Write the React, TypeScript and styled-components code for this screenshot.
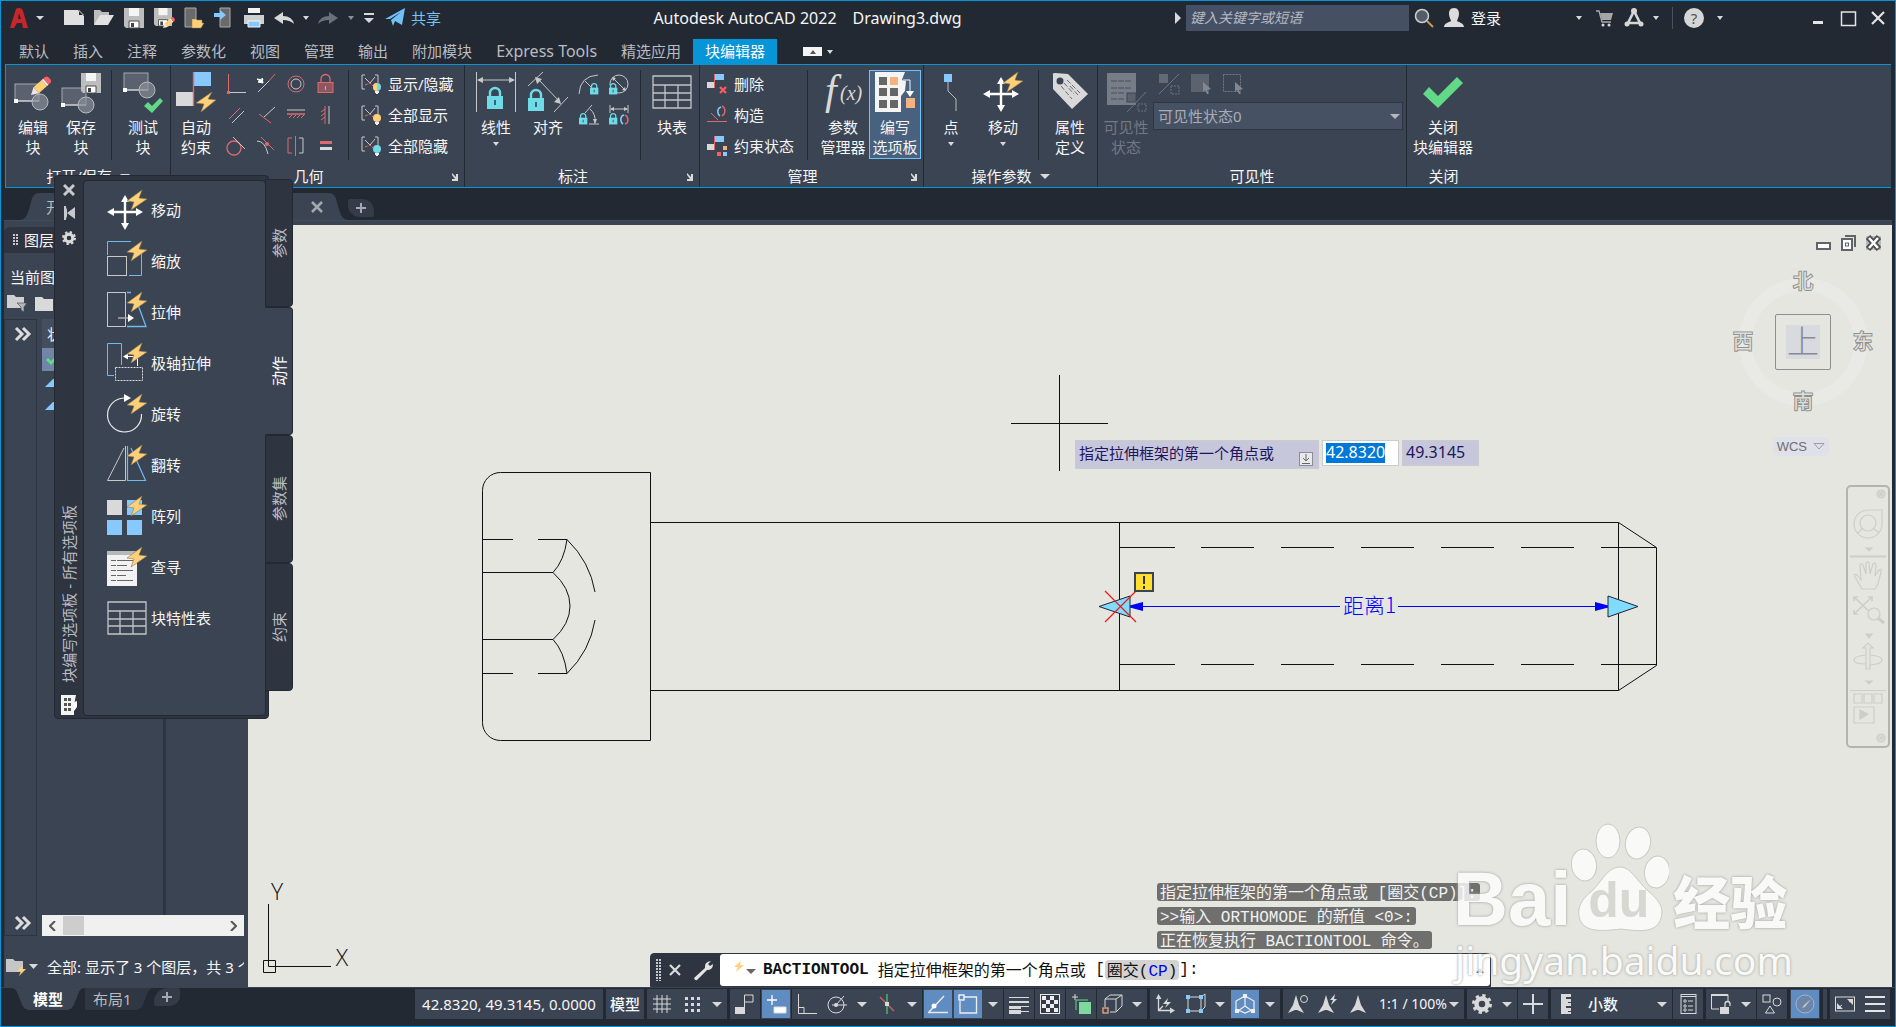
import React from "react";
import styled, { createGlobalStyle, css } from "styled-components";

const c = {
  dark: "#222933",
  panel: "#3b4453",
  bar: "#2e3440",
  accent: "#0696d7",
  canvas: "#e5e6e0",
  text: "#f5f5f5",
  dim: "#b9bcc2",
  grey: "#d9d9d9",
  line: "#c8c8c8",
  red: "#e0696d",
  blue: "#87c9fc",
  cyan: "#6fdbe6",
  gold: "#ffd078",
  green: "#62d987",
};

const Global = createGlobalStyle`
  * { box-sizing: border-box; }
  body { margin: 0; background: ${c.dark}; overflow: hidden; }
  body, button, input, select {
    font-family: "Noto Sans", "Noto Sans CJK SC", sans-serif;
    font-size: 15px;
    line-height: 20px;
  }
  button, input, select { margin: 0; padding: 0; border: 0; background: none; color: inherit; border-radius: 0; }
  svg { display: block; flex: none; }
`;

/* ---------- icons ---------- */

const Bolt = () => (
  <path d="M35 0L20 11L27 12L24 20L40 9L32 8Z" fill={c.gold} stroke="#8f7a50" strokeWidth=".6" />
);
const Pencil = ({ t }: { t: string }) => (
  <g transform={t}>
    <path d="M0 0L7 -4V4Z" fill="#e8e8e8" />
    <rect x="7" y="-4" width="11" height="8" fill={c.gold} />
    <rect x="18" y="-4" width="2" height="8" fill="#f4f4f4" />
    <path d="M20 -4h2a3 4 0 0 1 0 8h-2z" fill="#ff5f63" />
  </g>
);
const Floppy = ({ t }: { t?: string }) => (
  <g transform={t}>
    <path d="M0 0H20V20H2L0 18Z" fill="#bdbdbd" />
    <path d="M5 0H15V8H5Z" fill="#f5f5f5" />
    <path d="M5 13H15V20H5Z" fill="#fff" stroke="#4d4d4d" />
    <path d="M7 15h3v4H7z" fill="#444" />
  </g>
);
const Lock = ({ t }: { t?: string }) => (
  <g transform={t}>
    <path d="M3 10V6a5 5 0 0 1 10 0V10" fill="none" stroke={c.cyan} strokeWidth="2.4" />
    <rect y="9" width="16" height="13" fill={c.cyan} />
    <path d="M8 13v5" stroke="#2b4550" strokeWidth="1.6" />
  </g>
);
const Table = () => (
  <path d="M1 4H39V36H1ZM1 13H39M1 21H39M1 28H39M13 13V36M26 13V36" fill="none" stroke="#c4c4c4" strokeWidth="1.3" />
);
const Cross4 = () => (
  <g>
    <path d="M18 7V35M4 21H32" stroke="#fff" strokeWidth="2.4" />
    <path d="M18 4l4 7h-8zM18 39l4-7h-8zM0 21l7-4v8zM36 21l-7-4v8z" fill="#fff" />
  </g>
);
const Shape = ({ x, y, cx, cy }: { x: number; y: number; cx: number; cy: number }) => (
  <g>
    <rect x={x} y={y} width="24" height="17" fill="#5b616e" stroke="#a5a8ae" />
    <path d={`M${x} ${y + 17}h24`} stroke="#e6e6e6" />
    <rect x={x - 1} y={y + 15} width="4" height="4" fill="#fff" />
    <circle cx={cx} cy={cy} r="8" fill="#8b909a" fillOpacity=".7" stroke="#b6b9be" />
  </g>
);
const Brackets = ({ bulb, half }: { bulb: string; half?: string }) => (
  <g>
    <path d="M4 1H1V15H4M14 1H17V9" fill="none" stroke={c.line} />
    <path d="M9 9L14 3" fill="none" stroke={c.line} />
    <path d="M9 9L4 4" fill="none" stroke={c.line} />
    <path d="M4 11L9 9L12 12" fill="none" stroke={c.red} strokeDasharray="3 1" />
    <circle cx="16" cy="13" r="4" fill={bulb} />
    {half && <path d="M16 9a4 4 0 0 0 0 8z" fill={half} />}
    <path d="M14 17h4v2h-1v1h-2v-1h-1z" fill="#f0f0f0" />
  </g>
);
const Blocks = () => (
  <g>
    <rect y="8" width="7" height="6" fill={c.grey} />
    <rect x="8" width="9" height="6" fill={c.blue} />
    <path d="M7.500 0V14" stroke={c.red} />
  </g>
);
const R = ({ d, s = c.line, w = 1 }: { d: string; s?: string; w?: number }) => (
  <path d={d} fill="none" stroke={s} strokeWidth={w} />
);

const art: Record<string, React.ReactNode> = {
  edit: <><Shape x={2} y={12} cx={27} cy={30} /><Pencil t="translate(18 23) rotate(-42)" /></>,
  save: <><Shape x={1} y={16} cx={25} cy={33} /><Floppy t="translate(20 1)" /></>,
  test: <><Shape x={1} y={1} cx={24} cy={18} /><path d="M21 34l4-4 4 4 8-8 3 3-11 12z" fill={c.green} /></>,
  auto: <>
    <rect y="20" width="17" height="14" fill={c.grey} /><rect x="18" width="17" height="14" fill={c.blue} />
    <R d="M17.500 0V34" s={c.red} w={1.4} /><path d="M36 20L20 31L28 32L25 40L40 28L32 27Z" fill={c.gold} stroke="#8f7a50" strokeWidth=".6" /></>,
  linear: <><R d="M.5 0V40M39.500 0V40M2 8H38" /><path d="M1 8l6-3v6zM39 8l-6-3v6z" fill={c.line} /><Lock t="translate(11 15)" /></>,
  aligned: <><R d="M0 14L15 0M26 40L40 25M10 7L32 30" /><path d="M7 5l7 2-5 5zM33 32l-7-2 5-5z" fill={c.line} /><Lock t="translate(0 17)" /></>,
  table: <Table />,
  fx: <>
    <text x="2" y="32" fill={c.grey} fontFamily="Liberation Serif, serif" fontStyle="italic" fontSize="42">f</text>
    <text x="17" y="28" fill={c.grey} fontFamily="Liberation Serif, serif" fontStyle="italic" fontSize="20">(x)</text></>,
  author: <>
    <path d="M0 0H30L26 10V40H0Z" fill="#f4f4f4" />
    {[5, 16, 28].map((y) => [4, 15].map((x) => (
      <rect key={x + y * 50} x={x} y={y} width="8" height="8" fill={x === 15 && y === 5 ? "#f5b27f" : "#666"} />)))}
    <path d="M26 8l5 1-1 10-4 5z" fill="#f4f4f4" /><R d="M28 8H35V19" s="#f4f4f4" /><path d="M31 19h8l-4 6z" fill="#fff" />
    <rect x="31" y="26" width="9" height="10" fill="#f5b27f" /></>,
  point: <><rect x="13" y="2" width="8" height="8" fill={c.blue} /><R d="M17 10V19L25 27V39" s="#bbb" /></>,
  move: <><g transform="translate(0 1)"><Cross4 /></g><Bolt /></>,
  tag: <><path d="M3 3Q2 1 5 1L18 2L38 22L22 37L3 17Z" fill={c.grey} /><circle cx="10" cy="9" r="3.500" fill={c.panel} />
    <path d="M17 8L30 21M14 11L24 22M11 14L22 27M20 14l8 9" stroke="#6a6f78" strokeDasharray="5 2" /></>,
  vis: <g opacity=".75"><path d="M1 1H30V33H1Z" fill="#8c9099" /><path d="M5 9H26M5 16H26M5 21H19M5 27H19" stroke="#4d545f" strokeDasharray="6 1" />
    <rect x="21" y="21" width="9" height="9" fill="#666c78" stroke="#3b4453" /><R d="M21 40L40 20" s="#7e838d" /><rect x="32" y="32" width="8" height="7" fill="none" stroke="#7e838d" strokeDasharray="2 1" /></g>,
  check: <path d="M0 22L6 15L15 24L34 5L40 11L15 36Z" fill={c.green} />,

  perp: <><R d="M2.500 0V19" s={c.red} /><R d="M2 18.500H20" /><rect x="1" y="17" width="3" height="3" fill={c.red} /></>,
  coll: <><R d="M2 18L14 6" /><R d="M13 7L19 0" s={c.red} /><path d="M1 5l6 1-1-2 1 5-5-1 2-1z" fill="#fff" stroke="#fff" /></>,
  conc: <><circle cx="10" cy="10" r="8" fill="none" stroke={c.red} /><circle cx="10" cy="10" r="5" fill="none" stroke={c.line} /></>,
  fix: <><path d="M5 9V5a4 4 0 0 1 9 0V9" fill="none" stroke={c.red} strokeWidth="1.300" /><rect x="2" y="8.500" width="15" height="10" fill="#8e565f" stroke={c.red} /><R d="M9.500 12v4" s="#e8a0a0" /></>,
  para: <><R d="M3 14L14 3" s={c.red} /><R d="M6 18L18 6" /></>,
  tang2: <><R d="M8 12L19 2" /><R d="M3 9L15 18" s={c.red} /></>,
  horiz: <><R d="M1 5H19" /><R d="M1 9H19" s={c.red} w={1.500} /><R d="M6 10L3 13M10 10L7 13M14 10L11 13M18 10L15 13" s={c.red} /></>,
  vert: <><R d="M13 1V19" /><R d="M9 1V19" s={c.red} /><R d="M9 4L5 7M9 8L5 11M9 12L5 15" s={c.red} /></>,
  tang: <><circle cx="8" cy="12" r="7" fill="none" stroke={c.red} strokeWidth="1.300" /><R d="M7 1L19 13" /></>,
  smooth: <><R d="M1 5Q9 5 12 18" /><R d="M5 1L18 14" s={c.red} /><circle cx="11" cy="8" r="2" fill={c.red} /></>,
  sym: <><R d="M6 2H2V17H6" s={c.red} /><R d="M13 2H17V17H13" /><R d="M9.500 0V20" s={c.red} /></>,
  equal: <><path d="M4 5h12v3H4z" fill={c.red} /><path d="M4 11h12v3H4z" fill={c.grey} /></>,
  showhide: <Brackets bulb={c.cyan} half={c.gold} />,
  showall: <Brackets bulb={c.gold} />,
  hideall: <Brackets bulb={c.cyan} />,
  rad: <><R d="M0 20Q1 2 19 1M6 7L13 14" /><Lock t="translate(11 9) scale(.52)" /></>,
  dia: <><circle cx="10" cy="10" r="9" fill="none" stroke={c.line} /><R d="M4 4L16 16" /><path d="M3 3l4 1-3 3zM17 17l-4-1 3-3z" fill={c.line} /><Lock t="translate(0 9) scale(.52)" /></>,
  ang: <><R d="M10 19H20M6 8L13 0M11 4Q17 9 16 18" /><path d="M16 19l-2-5h4z" fill={c.line} /><Lock t="translate(0 8) scale(.52)" /></>,
  conv: <><R d="M1 0V8M19 0V8M2 4H18" /><path d="M1 4l4-2v4zM19 4l-4-2v4z" fill={c.line} /><Lock t="translate(0 8) scale(.52)" />
    <R d="M14 19a4 5 0 0 1-1-8l2-1" s={c.blue} w={1.600} /><R d="M16 10a4 5 0 0 1 2 8l-2 1" s={c.red} w={1.600} /></>,
  del: <><Blocks /><R d="M13 13L19 19M19 13L13 19" s="#ff5a5f" w={2.200} /></>,
  cons: <><R d="M0 16.500H20" s={c.red} /><R d="M4 8L11 15" s={c.red} /><R d="M13 11a4 5 0 0 1-1-8l2-1" s={c.blue} w={1.500} /><R d="M15 1a4 5 0 0 1 2 8l-2 2" s={c.red} w={1.500} /></>,
  state: <><Blocks /><rect x="10" y="16" width="4" height="4" fill="#ff5a5f" /><rect x="16" y="16" width="4" height="4" fill={c.blue} /><rect x="16" y="10" width="4" height="4" fill="#f5b27f" /></>,
  v1: <g opacity=".5"><rect width="9" height="9" fill="#8c9099" /><R d="M0 20L20 0" s="#a0a4ac" /><rect x="12" y="12" width="8" height="8" fill="none" stroke="#a0a4ac" strokeDasharray="2 1" /></g>,
  v2: <g opacity=".7"><rect width="18" height="18" fill="#6b717c" /><path d="M12 8l8 7-4 1 2 4-2 0-2-4-2 2z" fill="#a0a4ac" /></g>,
  v3: <g opacity=".7"><rect x=".5" y=".5" width="17" height="17" fill="none" stroke="#8c9099" strokeDasharray="2 1" /><path d="M12 8l8 7-4 1 2 4-2 0-2-4-2 2z" fill="#a0a4ac" /></g>,

  new: <path d="M0 2H14L20 8V17H0ZM15 2V7H20Z" fill="#e0e0e0" />,
  open: <><path d="M0 17V2H6L8 4H15V8" fill="#bdbdbd" /><path d="M0 17L6 7H20L14 17Z" fill="#e2e2e2" /></>,
  floppy: <Floppy />,
  saveas: <><Floppy t="scale(.9)" /><Pencil t="translate(9 20) rotate(-42) scale(.6)" /></>,
  web: <><path d="M1 0H12V19H1Z" fill="#6a6a6a" stroke="#aaa" /><path d="M8 20V11h4l1 1h5v3h2l-3 5z" fill={c.gold} stroke="#8f7a50" strokeWidth=".5" /></>,
  mobile: <><path d="M6 0H16V19H6Z" fill="#6a6a6a" stroke="#aaa" /><path d="M0 5h6V2l6 5-6 5V9H0z" fill={c.blue} /></>,
  print: <><path d="M4 0H16V5H4Z" fill="#f2f2f2" /><path d="M0 7H20V16H0Z" fill="#cfcfcf" /><path d="M4 13H16V19H4Z" fill={c.blue} stroke="#f4f4f4" /></>,
  undo: <path d="M0 10L9 4V8Q18 8 20 16Q16 12 9 12V16Z" fill={c.grey} />,
  redo: <path d="M20 10L11 4V8Q2 8 0 16Q4 12 11 12V16Z" fill="#6a7079" />,
  custom: <><path d="M0 4H10V6H0Z" fill={c.grey} /><path d="M0 9H10L5 14Z" fill={c.grey} /></>,
  plane: <path d="M0 11L20 0L17 17L10 13L8 18L6 12L16 4L5 11Z" fill="#71c1f7" />,
  play: <path d="M0 4L6 10L0 16Z" fill={c.grey} />,
  mag: <><circle cx="7" cy="8" r="6.500" fill="#555c69" stroke="#d0d0d0" strokeWidth="1.500" /><path d="M12 13L18 19" stroke="#c99a5b" strokeWidth="2" /></>,
  user: <path d="M10 0c4 0 5 3 5 6s-2 6-2 7c1 1 7 2 7 6H0c0-4 6-5 7-6 0-1-2-4-2-7s1-6 5-6z" fill="#dcdcdc" />,
  cart: <><path d="M0 2H3L6 13H15" fill="none" stroke="#aaa" strokeWidth="1.300" /><path d="M4 4H17L15 11H6Z" fill="#a6a6a6" /><circle cx="7" cy="16" r="1.500" fill={c.grey} /><circle cx="13" cy="16" r="1.500" fill={c.grey} /></>,
  apps: <><path d="M10 3L4 15H16Z" fill="none" stroke="#d6d6d6" strokeWidth="2.600" /><circle cx="10" cy="3" r="3" fill="#d6d6d6" /><circle cx="3" cy="16" r="2.500" fill="#d6d6d6" /><circle cx="17" cy="16" r="2.500" fill="#d6d6d6" /></>,
  min: <path d="M0 12h10v3H0z" fill="#e4e4e4" />,
  max: <path d="M.5 4H14.500V17.500H.5ZM0 4H15" fill="none" stroke="#e4e4e4" strokeWidth="1.500" />,
  close: <path d="M1 4L13 16M13 4L1 16" fill="none" stroke="#e4e4e4" strokeWidth="2.200" />,
  logo: <path d="M0 20L6 1Q7 0 9 0Q12 0 13 3L18 20H13L12 15H7L4 20ZM8 11H11L9 5Z" fill="#c8262b" fillRule="evenodd" />,

  pScale: <><rect x=".5" y="15.500" width="19" height="19" fill="none" stroke={c.line} /><path d="M.5 14V.5H24M34.500 10V34.500H22" fill="none" stroke="#6fb9ee" /><Bolt /></>,
  pStretch: <><path d="M20 .5H24M30 10L39 34.500H20" fill="none" stroke="#6fb9ee" strokeWidth="1.300" /><rect x=".5" y=".5" width="18" height="34" fill="none" stroke={c.line} /><R d="M11 26H22" s="#aaa" w={1.500} /><path d="M21 22l6 4-6 4z" fill="#fff" /><Bolt /></>,
  pPolar: <><path d="M7 32.500H.5V.5H14.500V22" fill="none" stroke="#6fb9ee" /><rect x="8.500" y="24.500" width="27" height="13" fill="none" stroke="#ddd" strokeDasharray="2 1" /><R d="M20 13.500H30.500V23" s="#fff" /><path d="M16 13.500l5-3v6z" fill="#fff" /><Bolt /></>,
  pRotate: <><path d="M17 4A17 17 0 1 0 34.500 20" fill="none" stroke="#e6e6e6" strokeWidth="1.200" /><path d="M17 0l7 4-7 4z" fill="#fff" /><Bolt /></>,
  pFlip: <><path d="M18.500 1V35.500H.5L17 3" fill="none" stroke={c.line} /><path d="M20.500 1V35.500H38.500L24 3" fill="none" stroke="#6fb9ee" strokeWidth="1.200" /><Bolt /></>,
  pArray: <><rect y="4" width="15" height="15" fill={c.grey} /><path d="M20 4h15v15H20zM0 24h15v15H0zM20 24h15v15H20z" fill={c.blue} /><Bolt /></>,
  pLookup: <><path d="M0 4H30V39H0Z" fill="#f2f2f2" /><path d="M0 4H30V8H0Z" fill="#b8b8b8" /><path d="M4 13.500H26M4 18.500H20M4 23.500H26M4 28.500H19M4 33.500H26" stroke="#666" strokeDasharray="5 1 20" /><Bolt /></>,
  pGrid: <><path d="M0 0H15L13 10V20H0Z" fill="#f4f4f4" /><path d="M13 7l3-1v6l-3 4z" fill="#fff" /><path d="M3 3h3v3H3zM7 3h3v3H7zM3 8h3v3H3zM7 8h3v3H7zM3 13h3v3H3zM7 13h3v3H7z" fill="#555" /></>,

  sGrid: <R d="M1 5H19M1 10H19M1 15H19M5 1V19M10 1V19M15 1V19" s={c.grey} />,
  sDots: <path d="M3 3h3v3H3zM9 3h3v3H9zM15 3h3v3h-3zM3 9h3v3H3zM9 9h3v3H9zM15 9h3v3h-3zM3 15h3v3H3zM9 15h3v3H9zM15 15h3v3h-3z" fill={c.grey} />,
  sInfer: <><rect y="13" width="9" height="7" fill={c.grey} /><R d="M9.500 20V1H18V8H10" s={c.grey} /></>,
  sDyn: <><R d="M6 1V11M1 6H11" s="#fff" w={1.300} /><path d="M8 13H20V19H8Z" fill="#fff" stroke="#ddd" /></>,
  sOrtho: <><R d="M1.500 0V19.500H20M1 13.500H7V19" s={c.grey} /></>,
  sPolar: <><circle cx="9" cy="11" r="8" fill="none" stroke={c.grey} /><R d="M9 11L17 2M5 11H20" s={c.grey} /><circle cx="9" cy="11" r="2" fill={c.grey} /></>,
  sIso: <><R d="M3 3L17 17" s="#c0605f" w={1.500} /><R d="M10 0V20" s="#4fb06c" w={1.500} /><rect x="8" y="8" width="4" height="4" fill={c.grey} /></>,
  sTrack: <><R d="M0 18.500H20M1 18L16 2" s="#e8e8e8" w={1.500} /><circle cx="6" cy="12" r="2.500" fill="#fff" /></>,
  sSnap: <><R d="M6 3H18.500V19H2V7" s="#eee" w={1.300} /><rect x="1" y="1" width="5" height="5" fill="none" stroke="#fff" strokeWidth="1.300" /></>,
  sLwt: <path d="M0 3H20V4H0ZM0 7H20V9H0ZM0 12H20V13H0ZM0 12H12V15H0ZM0 17H20V18H0ZM0 16H12V20H0Z" fill={c.grey} />,
  sTrans: <><rect x=".5" y=".5" width="19" height="19" fill="#333b48" stroke="#e8e8e8" /><path d="M2 2h4v4H2zM10 2h4v4h-4zM6 6h4v4H6zM14 6h4v4h-4zM2 10h4v4H2zM10 10h4v4h-4zM6 14h4v4H6zM14 14h4v4h-4z" fill="#eee" /></>,
  sCycle: <><R d="M4 0V6M1 3H7" s={c.grey} /><R d="M5 16V6H17" s={c.green} /><rect x="8" y="8" width="12" height="12" fill="#7fd99f" /></>,
  s3d: <><R d="M3 13V5L8 1H20V12L14 18H8M3 5H14V17M14 5L20 1" s={c.grey} /><rect x="1" y="14" width="5" height="5" fill="none" stroke="#f5a878" strokeWidth="1.300" /></>,
  sUcs: <><R d="M3.500 3V16.500H17M4 16L8 12" s={c.grey} w={1.300} /><path d="M3.500 0l3 5H1zM20 16.500l-5 3v-6zM13 4l-5 6h4l-2 4 6-6h-4z" fill={c.grey} /></>,
  sFilter: <><R d="M3 3V17H16V3ZM16 3L20 0V13L16 17" s={c.grey} /><path d="M1 1h4v4H1zM14 1h4v4h-4zM1 15h4v4H1zM14 15h4v4h-4z" fill={c.blue} /></>,
  sGizmo: <><R d="M10 2L19 7V15L10 19L1 15V7ZM10 3V12L3 17M10 12L17 17" s="#eee" w={1.200} /><path d="M8 0h4v4H8zM0 15h4v4H0zM16 15h4v4h-4z" fill="#eee" /></>,
  sAnno1: <><path d="M8 1L11 11L16 19L9 16H7L0 19L5 11Z" fill={c.grey} /><circle cx="16" cy="5" r="3.500" fill="none" stroke={c.grey} /></>,
  sAnno2: <><path d="M8 1L11 11L16 19L9 16H7L0 19L5 11Z" fill={c.grey} /><path d="M17 0l-5 6h3l-2 5 6-6h-3z" fill={c.grey} /></>,
  sAnno3: <path d="M10 1L13 11L18 19L11 16H9L2 19L7 11Z" fill={c.grey} />,
  gear: <><circle cx="10" cy="10" r="5.500" fill="none" stroke={c.grey} strokeWidth="4.500" /><circle cx="10" cy="10" r="8.500" fill="none" stroke={c.grey} strokeWidth="3" strokeDasharray="3.300 3.376" /></>,
  plus: <path d="M9 0h2v9h9v2h-9v9H9v-9H0V9h9z" fill={c.grey} />,
  ruler: <path d="M5 0H15V3H10V5H15V8H12V9H15V12H10V14H15V17H12V18H15V20H5Z" fill={c.grey} />,
  sProps: <><rect x="3" y=".5" width="15" height="19" fill="none" stroke={c.grey} /><path d="M3 2.500H18M6 6h2v2H6zM6 11h2v2H6zM6 15h2v2H6z" stroke={c.grey} /><R d="M10 7H15M10 12H15M10 16H15" s={c.grey} /></>,
  sLock: <><R d="M8 15H.5V.5H17V8" s={c.grey} /><path d="M0 0h17v2H0z" fill={c.grey} /><rect x="9" y="13" width="9" height="7" fill={c.grey} /><R d="M14 13V10a2.500 2.500 0 0 1 5 0v2" s={c.grey} w={1.300} /></>,
  sIsolate: <><rect x="1" y="1" width="7" height="7" fill="none" stroke={c.grey} /><circle cx="15" cy="8" r="4" fill="none" stroke={c.grey} /><path d="M8 12L12.500 19H3.500Z" fill="none" stroke={c.grey} /></>,
  sPerf: <><circle cx="10" cy="10" r="9" fill="#6c86ab" stroke="#a5b3c8" /><path d="M16 5L10 13L7 14L9 11Z" fill="#c9c3b4" /></>,
  sFull: <><rect x=".5" y="3" width="19" height="14" fill="none" stroke={c.grey} /><path d="M12 5h6v6zM2 9v6h6z" fill={c.grey} /><R d="M14 8L17 6M3 14L7 11" s={c.grey} /></>,
  sMenu: <path d="M0 2h20v2H0zM0 9h20v2H0zM0 16h20v2H0z" fill="#e4e4e4" />,
  wrench: <path d="M1 18L12 8Q11 2 18 1L15 4L17 6L20 4Q20 10 14 10L4 20Q2 21 1 18Z" fill="#e4e4e4" />,
  folderF: <><path d="M0 2H7L9 4H17V15H0Z" fill="#d0d0d0" /><path d="M10 10H20L17 14V19L14 17V14Z" fill="#b5b5b5" stroke="#3b4453" strokeWidth=".6" /></>,
  folder: <><path d="M0 4H7L9 6H18V18H0Z" fill="#d9d9d9" /></>,
  folderB: <><path d="M0 2H7L9 4H17V15H0Z" fill="#c6c6c6" /><path d="M17 8l-6 6h4l-2 5 7-7h-4z" fill={c.gold} /></>,
  dbl: <path d="M1 4L7 10L1 16M8 4L14 10L8 16" fill="none" stroke="#dcdcdc" strokeWidth="3" />,
  launch: <path d="M0 1l4 4V2h2v7H0V7h3L0 3z" fill={c.grey} />,
  pin: <path d="M0 3h2v14H0zM3 10l8-6v12zM3 4v12l-1-3V7z" fill="#c6c9ce" />,
};

const Ic = ({ n, w = 20, h }: { n: string; w?: number; h?: number }) => (
  <svg width={w} height={h ?? w} viewBox={`0 0 ${w} ${h ?? w}`} aria-hidden="true" overflow="visible">{art[n]}</svg>
);
const Caret = ({ w = 7, fill = c.grey }: { w?: number; fill?: string }) => (
  <svg width={w} height={w > 8 ? 5 : 4} viewBox="0 0 8 4" preserveAspectRatio="none" aria-hidden="true"><path d="M0 0H8L4 4Z" fill={fill} /></svg>
);

/* ---------- frame ---------- */

const Window = styled.div`
  position: relative;
  display: flex;
  flex-direction: column;
  height: 100vh;
  min-height: 760px;
  border: 1px solid ${c.accent};
  background: ${c.dark};
  color: ${c.text};
  overflow: hidden;
`;
const IconButton = styled.button<{ $w?: number; $h?: number }>`
  display: flex;
  flex: none;
  align-items: center;
  justify-content: center;
  width: ${(p) => p.$w ?? 30}px;
  height: ${(p) => p.$h ?? 30}px;
`;

/* ---------- title bar ---------- */

const TitleBar = styled.header`
  display: flex;
  align-items: center;
  height: 38px;
  padding: 0 2px 4px 4px;
`;
const Title = styled.h1`
  flex: 1;
  margin: 0;
  display: flex;
  justify-content: center;
  gap: 16px;
  font-size: 16px;
  font-weight: 400;
  white-space: nowrap;
`;
const Share = styled.button`
  display: flex;
  align-items: center;
  gap: 6px;
  padding-left: 6px;
  color: #76c3f5;
`;
const Search = styled.input`
  width: 223px;
  height: 26px;
  margin: 0 3px 0 4px;
  padding: 0 4px 2px;
  background: #465064;
  color: ${c.text};
  font-size: 14px;
  font-style: italic;
  &::placeholder { color: #b5b9c1; opacity: 1; }
`;
const SignIn = styled.button`
  display: flex;
  align-items: center;
  gap: 7px;
  width: 133px;
  padding-left: 8px;
`;
const Rule = styled.span`
  width: 1px;
  height: 22px;
  margin: 0 8px 0 9px;
  background: #4a5261;
`;
const Help = styled.span`
  display: grid;
  place-items: center;
  width: 20px;
  height: 20px;
  border-radius: 50%;
  background: #d6d6d6;
  color: #4b5059;
`;

/* ---------- ribbon ---------- */

const TabRow = styled.nav`
  display: flex;
  align-items: stretch;
  height: 25px;
  padding-left: 6px;
`;
const Tab = styled.button<{ $on?: boolean; $latin?: boolean }>`
  padding: 0 12px 2px;
  white-space: nowrap;
  color: ${(p) => (p.$on ? "#fff" : c.dim)};
  font-size: ${(p) => (p.$latin ? 16 : 15)}px;
  ${(p) => p.$on && css`background: ${c.accent};`}
`;
const Minimize = styled.button`
  display: flex;
  align-items: center;
  gap: 5px;
  margin-left: 26px;
`;
const MinimizeBox = styled.span`
  display: grid;
  place-items: center;
  width: 19px;
  height: 9px;
  background: #f4f4f4;
`;
const Ribbon = styled.section`
  display: flex;
  height: 124px;
  margin: 0 4px;
  border: 1px solid ${c.accent};
  border-right: 0;
  background: ${c.panel};
`;
const GroupBox = styled.div<{ $w: number; $last?: boolean }>`
  display: flex;
  flex-direction: column;
  flex: none;
  width: ${(p) => p.$w}px;
  ${(p) => !p.$last && css`border-right: 1px solid ${c.dark};`}
`;
const GroupBody = styled.div<{ $pad?: number }>`
  display: flex;
  align-items: flex-start;
  flex: 1;
  padding-left: ${(p) => p.$pad ?? 0}px;
`;
const GroupTitle = styled.div`
  display: flex;
  align-items: center;
  justify-content: center;
  gap: 8px;
  height: 22px;
`;
const GroupName = styled.span`flex: 0 0 auto;`;
const TitleGrow = styled.span`flex: 1; text-align: center; padding-left: 8px;`;
const Big = styled.button<{ $w?: number; $on?: boolean }>`
  display: flex;
  flex-direction: column;
  align-items: center;
  gap: 5px;
  flex: none;
  width: ${(p) => p.$w ?? 52}px;
  height: 89px;
  margin-top: 5px;
  padding-top: 1px;
  border: 1px solid transparent;
  white-space: pre;
  text-align: center;
  ${(p) => p.$on && css`
    border: 1px solid #6fc2f5;
    background: #47617f;
  `}
  &:disabled { color: #727884; }
`;
const BigLabel = styled.span`
  display: flex;
  flex-direction: column;
  align-items: center;
`;
const CaretRow = styled.span`
  display: grid;
  place-items: center;
  height: 14px;
`;
const Divider = styled.span<{ $l: number; $r: number }>`
  flex: none;
  width: 1px;
  height: 90px;
  margin: 5px ${(p) => p.$r}px 0 ${(p) => p.$l}px;
  background: ${c.dark};
`;
const Small = styled.div<{ $cols: number }>`
  display: grid;
  flex: none;
  grid-template-columns: repeat(${(p) => p.$cols}, 30px);
  grid-auto-rows: 31px;
  padding-top: 3px;
`;
const Rows = styled.div<{ $w?: number }>`
  display: grid;
  flex: none;
  grid-auto-rows: 31px;
  width: ${(p) => p.$w ?? 93}px;
  padding-top: 3px;
`;
const RowButton = styled.button`
  display: flex;
  align-items: center;
  gap: 7px;
  white-space: nowrap;
`;
const Visibility = styled.div`
  display: flex;
  flex-direction: column;
  flex: 1;
  padding: 4px 3px 0 1px;
`;
const SmallRow = styled.div`
  display: flex;
  height: 33px;
`;
const SelectBox = styled.label`
  position: relative;
  display: block;
  border: 1px solid #2e3543;
`;
const SelectArrow = styled.span`
  position: absolute;
  right: 2px;
  top: 11px;
  pointer-events: none;
`;
const Select = styled.select`
  display: block;
  width: 100%;
  height: 26px;
  padding: 0 4px;
  appearance: none;
  background: #475164;
  color: #a9adb5;
  opacity: 1;
`;

const Button2 = ({ icon, a, b, w, on, off, drop }: { icon: string; a: string; b?: string; w?: number; on?: boolean; off?: boolean; drop?: boolean }) => (
  <Big $w={w} $on={on} disabled={off}>
    <Ic n={icon} w={40} />
    <BigLabel>
      <span>{a}</span>
      {b && <span>{b}</span>}
      {drop && <CaretRow><Caret w={6} /></CaretRow>}
    </BigLabel>
  </Big>
);
const Group = ({ w, pad, title, launch, drop, last, children }: { w: number; pad?: number; title: string; launch?: boolean; drop?: boolean; last?: boolean; children: React.ReactNode }) => (
  <GroupBox $w={w} $last={last}>
    <GroupBody $pad={pad}>{children}</GroupBody>
    <GroupTitle>
      {launch ? <TitleGrow>{title}</TitleGrow> : <GroupName>{title}</GroupName>}
      {drop && <Caret w={10} />}
      {launch && <IconButton $w={18} $h={20} aria-label="对话框"><Ic n="launch" w={6} h={9} /></IconButton>}
    </GroupTitle>
  </GroupBox>
);
const IconGrid = ({ cols, names }: { cols: number; names: string[] }) => (
  <Small $cols={cols}>
    {names.map((n) => <IconButton key={n} $h={31} aria-label={n}><Ic n={n} /></IconButton>)}
  </Small>
);
const TextRows = ({ items, w }: { items: [string, string][]; w?: number }) => (
  <Rows $w={w}>
    {items.map(([n, t]) => <RowButton key={n}><Ic n={n} />{t}</RowButton>)}
  </Rows>
);

/* ---------- drawing tabs ---------- */

const FileTabs = styled.nav`
  display: flex;
  align-items: flex-end;
  height: 32px;
  margin: 0 3px;
  padding-left: 16px;
`;
const FileTab = styled.button<{ $w: number }>`
  display: flex;
  align-items: center;
  justify-content: space-between;
  width: ${(p) => p.$w}px;
  height: 27px;
  padding: 0 4px 0 6px;
  background: ${c.panel};
  color: ${c.dim};
`;
const Strip = styled.div`
  height: 5px;
  margin: 0 3px;
  background: ${c.panel};
  border-top: 1px solid #434b59;
`;
const Slope = ({ flip, down, fill = c.panel, h = 27 }: { flip?: boolean; down?: boolean; fill?: string; h?: number }) => {
  const path = down
    ? (flip ? "M0 27C8 27 8 22 11 14S14 0 20 0H0Z" : "M20 27C12 27 12 22 9 14S6 0 0 0H20Z")
    : (flip ? "M0 0C8 0 8 6 10 13S14 27 20 27H0Z" : "M20 0C12 0 12 6 10 13S6 27 0 27H20Z");
  return <svg width="20" height={h} viewBox="0 0 20 27" preserveAspectRatio="none" aria-hidden="true"><path d={path} fill={fill} /></svg>;
};
const AddTab = styled.button<{ $up?: boolean }>`
  display: grid;
  place-items: center;
  width: 26px;
  height: 18px;
  margin-bottom: 3px;
  background: #343c49;
  border-radius: ${(p) => (p.$up ? "14px 2px 10px 2px" : "2px 12px 2px 12px")};
`;
const PlusMark = () => <svg width="10" height="10" viewBox="0 0 10 10" aria-hidden="true"><path d="M4 0h2v4h4v2H6v4H4V6H0V4h4z" fill="#a4a8af" /></svg>;

/* ---------- main area ---------- */

const Main = styled.main`
  display: flex;
  flex: 1;
  min-height: 0;
  margin: 0 3px;
`;
const Layers = styled.aside`
  display: flex;
  flex-direction: column;
  flex: none;
  width: 244px;
  padding-top: 2px;
  background: ${c.panel};
  overflow: hidden;
  white-space: nowrap;
`;
const LayersHead = styled.h2`
  display: flex;
  align-items: center;
  gap: 6px;
  height: 26px;
  margin: 0;
  padding-left: 9px;
  border-radius: 6px 6px 0 0;
  background: ${c.bar};
  font-size: 15px;
  font-weight: 400;
`;
const Grip = styled.span<{ $h: number }>`
  width: 5px;
  height: ${(p) => p.$h}px;
  background-image: radial-gradient(circle at 1px 1px, #c5c8cd 1px, transparent 1px);
  background-size: 3px 3px;
`;
const Current = styled.p`
  margin: 0;
  padding: 14px 6px 0;
`;
const LayerTools = styled.div`
  display: flex;
  gap: 8px;
  height: 32px;
  padding: 6px 3px 0;
`;
const LayerBody = styled.div`
  display: flex;
  flex: 1;
`;
const Tree = styled.div`
  display: flex;
  flex-direction: column;
  align-items: flex-end;
  justify-content: space-between;
  width: 33px;
  padding: 0 1px 2px 0;
  border: 1px solid ${c.bar};
`;
const LayerList = styled.div`
  display: flex;
  flex-direction: column;
  flex: 1;
  margin: 0 4px 0 5px;
`;
const LayerTable = styled.table`
  width: 100%;
  border-collapse: collapse;
  th { height: 29px; padding: 0 5px; background: #444e5f; font-weight: 400; text-align: left; }
  td { height: 23px; padding: 0 3px; }
`;
const LayerRow = styled.tr<{ $on?: boolean }>`
  background: ${(p) => (p.$on ? "#7186a6" : "transparent")};
`;
const Columns = styled.div`
  flex: 1;
  width: 124px;
  border-right: 3px solid ${c.bar};
`;
const Scroll = styled.div`
  display: flex;
  align-items: center;
  height: 21px;
  background: #f0f0f0;
`;
const Thumb = styled.span`
  width: 21px;
  height: 19px;
  background: #cdcdcd;
`;
const Grow = styled.span`flex: 1;`;
const LayerFoot = styled.div`
  display: flex;
  align-items: center;
  height: 51px;
  padding: 10px 4px 0 2px;
`;
const FootText = styled.span`
  flex: 1;
  margin-left: 7px;
  overflow: hidden;
`;

/* ---------- canvas ---------- */

const Canvas = styled.section`
  position: relative;
  flex: 1;
  background: ${c.canvas};
  overflow: hidden;
`;
const Drawing = styled.svg`
  position: absolute;
  inset: 0;
  width: 100%;
  height: 100%;
`;
const Prompt = styled.form`
  position: absolute;
  left: 827px;
  top: 215px;
  display: flex;
  align-items: flex-start;
  gap: 3px;
  color: #1d1560;
`;
const PromptText = styled.div`
  display: flex;
  width: 244px;
  height: 29px;
  padding: 2px 3px;
  justify-content: space-between;
  border: 1px solid #cacad0;
  background: #c7c7db;
  white-space: nowrap;
`;
const PromptKey = styled.span`
  display: grid;
  place-items: center;
  align-self: flex-end;
  width: 14px;
  height: 14px;
  margin-right: 2px;
  border: 1px solid #8c8c94;
  background: #e9e9ec;
`;
const Coord = styled.input<{ $on?: boolean }>`
  width: 77px;
  height: 26px;
  padding: 0 3px 2px;
  border: 1px solid #cacad0;
  background: #c7c7db;
  color: #1d1560;
  font-size: 16px;
  ${(p) => p.$on && css`
    color: #fff;
    background: linear-gradient(#0078d7, #0078d7) 3px 2px / 59px 20px no-repeat #fff;
  `}
`;
const ViewControls = styled.div`
  position: absolute;
  right: 11px;
  top: 10px;
  display: flex;
  gap: 10px;
`;
const Cube = styled.div`
  position: absolute;
  right: 19px;
  top: 45px;
  display: grid;
  grid-template: 42px 60px 42px / 40px 60px 40px;
  place-items: center;
  font-size: 20px;
  line-height: 24px;
`;
const CubeRing = styled.span`
  position: absolute;
  left: 6px;
  top: 8px;
  width: 128px;
  height: 128px;
  border: 13px solid #e9eae5;
  border-radius: 50%;
`;
const Compass = styled.span<{ $area: string }>`
  position: relative;
  grid-area: ${(p) => p.$area};
  place-self: ${(p) => (p.$area === "1/2" ? "start center" : p.$area === "3/2" ? "end center" : p.$area === "2/1" ? "center start" : "center end")};
  color: #e0e0dc;
  -webkit-text-stroke: 2px #8f9190;
  paint-order: stroke;
`;
const CubeFace = styled.button`
  grid-area: 2/2;
  display: grid;
  place-items: center;
  width: 56px;
  height: 56px;
  border: 1px solid #8e9090;
  border-radius: 2px;
`;
const FaceMark = styled.span`
  width: 34px;
  height: 34px;
  background: #d9dadf;
  color: #868b91;
  font-size: 32px;
  line-height: 32px;
  font-weight: 300;
`;
const Wcs = styled.button`
  position: absolute;
  right: 63px;
  top: 212px;
  display: flex;
  align-items: center;
  gap: 6px;
  height: 19px;
  padding: 0 4px;
  border-radius: 5px;
  background: #dfe0e9;
  color: #6d6f75;
  font: 13px/19px "Liberation Sans", sans-serif;
`;
const NavBar = styled.div`
  position: absolute;
  right: 2px;
  top: 260px;
  width: 44px;
  height: 263px;
  border: 2px solid #b3b4ae;
  border-radius: 5px;
`;
const History = styled.div`
  position: absolute;
  left: 909px;
  bottom: 38px;
  display: flex;
  flex-direction: column;
  align-items: flex-start;
  gap: 6px;
`;
const Mono = styled.span`
  font-family: "Liberation Mono", "Noto Sans CJK SC", monospace;
  font-size: 16px;
  white-space: pre;
`;
const HistoryLine = styled.div`
  height: 18px;
  padding: 0 3px;
  border-radius: 3px;
  background: #6f706e;
  color: #f2f2f2;
  font-size: 16px;
  line-height: 18px;
  white-space: pre;
`;
const Command = styled.div`
  position: absolute;
  left: 402px;
  right: 401px;
  bottom: 0;
  display: flex;
  align-items: center;
  height: 34px;
  border: 1px solid ${c.bar};
  border-radius: 4px 4px 0 0;
  background: ${c.bar};
`;
const CommandText = styled.div`
  display: flex;
  align-items: center;
  align-self: stretch;
  flex: 1;
  padding: 0 6px 0 14px;
  border-radius: 3px;
  background: #fff;
  color: #111;
  font-size: 16px;
  white-space: pre;
`;
const Option = styled.button`
  height: 20px;
  padding: 0 2px;
  border-radius: 4px;
  background: #d3d3d3;
  font-size: 16px;
  i { font-style: normal; color: #0000f0; }
`;
const CommandName = styled(Mono)`margin: 0 9px 0 7px; font-weight: 700;`;
const Watermark = styled.div`
  position: absolute;
  right: 97px;
  bottom: 4px;
  width: 342px;
  opacity: .8;
  color: #fff;
  pointer-events: none;
  text-shadow: 0 0 3px #a0a09a, 0 0 2px #b4b4ae;
`;
const MarkTop = styled.div`
  display: flex;
  align-items: flex-end;
  height: 114px;
  font: 700 76px/76px "Liberation Sans", sans-serif;
`;
const MarkPaw = styled.div`
  position: relative;
  width: 96px;
  height: 114px;
  margin: 0 4px 0 -2px;
`;
const MarkDu = styled.span`
  position: absolute;
  left: 19px;
  top: 52px;
  color: #d4d5cf;
  font-size: 50px;
  line-height: 50px;
  text-shadow: none;
`;
const MarkCjk = styled.span`
  margin: 0 0 2px 4px;
  font: 900 57px/72px "Noto Sans CJK SC", sans-serif;
`;
const MarkUrl = styled.div`
  font: 39px/46px "Noto Sans", sans-serif;
  text-align: center;
`;

/* ---------- tool palette ---------- */

const Palette = styled.aside`
  position: absolute;
  left: 53px;
  top: 174px;
  display: flex;
  align-items: flex-start;
`;
const PaletteFrame = styled.div`
  display: flex;
  width: 215px;
  height: 544px;
  padding: 4px 2px 2px 0;
  border: 1px solid ${c.dark};
  border-radius: 4px;
  background: ${c.bar};
`;
const PaletteSide = styled.div`
  display: flex;
  flex-direction: column;
  align-items: center;
  width: 28px;
  padding-bottom: 1px;
`;
const SideTitle = styled.span`
  margin: auto 0 12px;
  writing-mode: vertical-rl;
  text-orientation: sideways;
  transform: rotate(180deg);
  color: ${c.dim};
  white-space: nowrap;
`;
const Tools = styled.ul`
  flex: 1;
  margin: 0;
  padding: 4px 0 0 23px;
  list-style: none;
  border: 1px solid ${c.dark};
  border-radius: 4px;
  background: ${c.panel};
`;
const Tool = styled.button`
  display: flex;
  align-items: center;
  gap: 4px;
  height: 51px;
  padding-bottom: 1px;
`;
const SideTabs = styled.div`
  display: flex;
  flex-direction: column;
  margin: 4px 0 0 -4px;
`;
const SideTab = styled.button<{ $on?: boolean }>`
  display: grid;
  place-items: center;
  width: 28px;
  height: 128px;
  border: 1px solid ${c.dark};
  border-left-color: ${(p) => (p.$on ? c.panel : c.dark)};
  border-radius: 0 4px 4px 0;
  background: ${(p) => (p.$on ? c.panel : c.bar)};
  color: ${(p) => (p.$on ? "#fff" : c.dim)};
  span { writing-mode: vertical-rl; text-orientation: sideways; transform: rotate(180deg); }
`;

/* ---------- status bar ---------- */

const Bottom = styled.footer`
  display: flex;
  justify-content: space-between;
  height: 39px;
  padding: 0 5px 0 10px;
  border-top: 1px solid #3c4350;
`;
const LayoutTabs = styled.nav`
  display: flex;
  align-items: flex-start;
`;
const LayoutTab = styled.button<{ $on?: boolean }>`
  height: 22px;
  padding: 0 2px 0 ${(p) => (p.$on ? 2 : 8)}px;
  background: ${(p) => (p.$on ? c.panel : "#2f3743")};
  color: ${(p) => (p.$on ? "#fff" : c.dim)};
  font-weight: ${(p) => (p.$on ? 700 : 400)};
`;
const Status = styled.div`
  display: flex;
  align-items: flex-start;
  padding-top: 1px;
`;
const Cell = styled.div<{ $w?: number; $gap?: number }>`
  display: flex;
  align-items: center;
  justify-content: center;
  flex: none;
  width: ${(p) => (p.$w ? `${p.$w}px` : "auto")};
  height: 30px;
  margin-left: ${(p) => p.$gap ?? 1}px;
  background: ${c.panel};
  white-space: nowrap;
`;
const Toggle = styled(IconButton)<{ $on?: boolean }>`
  ${(p) => p.$on && css`background: #5f8dc1; border: 1px solid ${c.panel};`}
`;
const Semi = styled.span`font-weight: 500;`;
const Units = styled.button`
  display: flex;
  align-items: center;
  gap: 12px;
  width: 100%;
  padding: 0 5px;
  font-weight: 500;
`;
const Scale = styled.button`
  display: flex;
  align-items: center;
  justify-content: space-between;
  width: 91px;
  padding: 0 5px 0 6px;
  font-size: 14px;
`;

type Item = [string, boolean?];
const Cells = ({ items, gap, children }: { items: Item[]; gap?: number; children?: React.ReactNode }) => (
  <Cell $gap={gap}>
    {items.map(([n, on], i) =>
      n === "v" ? <IconButton key={i} $w={20} aria-label="更多"><Caret w={10} /></IconButton>
        : <Toggle key={i} $on={on} aria-label={n}><Ic n={n} /></Toggle>)}
    {children}
  </Cell>
);

const dashes = [1201, 1281, 1361, 1441, 1521];

const Model = () => (
  <Drawing viewBox="248 225 1644 762" preserveAspectRatio="xMidYMid meet" role="img" aria-label="螺栓">
    <g fill="none" stroke="#111" strokeWidth="1">
      <path d="M650.500 472.500H500.500A18 18 0 0 0 482.500 490.500V722.500A18 18 0 0 0 500.500 740.500H650.500Z" />
      <path d="M650.500 522.500H1618.500L1656.500 547.500V665.500L1618.500 690.500H650.500M1119.500 522.500V690.500M1618.500 522.500V690.500" />
      {[547.5, 664.5].map((y) => (
        <path key={y} d={`M1119 ${y}H1175${dashes.map((x) => `M${x} ${y}h53`).join("")}M1601 ${y}H1656`} />
      ))}
      <path d="M483 539.500H513M538 539.500H567M483 673.500H513M538 673.500H567M483 572.500H553M483 639.500H553" />
      <path d="M567 539.500Q564 561 553 572.500Q570 588 570 606T553 639.500Q564 651 567 673.500" />
      <path d="M567 539.500Q590 562 595 592M595 620Q590 651 567 673.500" />
      <path d="M1059.500 375V471M1011 423.500H1108" />
      <path d="M268.500 904V966.500H331M263.500 960.500h12v12h-12z" />
    </g>
    <g fill="#111" fontFamily="Open Sans, sans-serif" fontWeight="300" fontSize="23" textAnchor="middle">
      <text x="277" y="900">Y</text><text x="342" y="966">X</text>
    </g>
    <path d="M1143 606.500H1340M1398 606.500H1596" stroke="#0000ff" strokeWidth="1.200" />
    <path d="M1126 606.500L1143 602V611ZM1612 606.500L1595 602V611Z" fill="#0000ff" />
    <path d="M1099 606.500L1130 596V617ZM1638 606.500L1608 596V617Z" fill="#7fdcff" stroke="#223" />
    <path d="M1105 591L1136 622M1136 591L1105 622" stroke="#f01818" strokeWidth="1.200" />
    <text x="1343" y="613" fill="#0000ff" fontFamily="Noto Sans CJK SC, sans-serif" fontWeight="300" fontSize="21">距离1</text>
    <rect x="1135" y="573" width="18" height="18" fill="#ffe030" stroke="#3c4250" strokeWidth="2" />
    <path d="M1144 576V584M1144 586V589" stroke="#333" strokeWidth="2" />
  </Drawing>
);

const NavArt = () => (
  <svg width="40" height="259" viewBox="0 0 40 259" fill="none" stroke="#cdcec9" strokeWidth="1.200" aria-hidden="true">
    <circle cx="33" cy="7" r="4" fill="#d8d9d4" /><path d="M31 5l4 4M35 5l-4 4" />
    <path d="M34 23H20A14 14 0 1 0 34 37Z" /><circle cx="20" cy="36" r="8" /><path d="M10 46l5-5M25 41l6 5" />
    <path d="M18 61h6l-3 3z" fill="#cdcec9" /><path d="M2 69.500H38" strokeWidth="2" />
    <path d="M14 102L7 90Q5 86 9 88L13 93L12 78Q13 75 15 78L18 87L18 76Q20 73 21 76L22 87L25 77Q28 75 28 78L27 89L31 83Q34 81 33 85L30 97L27 102Z" />
    <path d="M6 110L24 127M24 110L6 127M6 114v-4h4M20 110h4v4M6 123v4h4" strokeWidth="1.600" /><circle cx="26" cy="127" r="6" fill={c.canvas} /><path d="M30 131l6 5" strokeWidth="3" />
    <path d="M18 147h6l-3 4z" fill="#cdcec9" />
    <path d="M18 182V161H15L20 156L25 161H22V182ZM18 168Q6 169 6 173T18 177M22 168Q34 169 34 173T22 178" />
    <path d="M18 194h6l-3 3z" fill="#cdcec9" /><path d="M2 203.500H38" />
    <path d="M6 207h8v9H6zM16 207h8v9h-8zM26 207h8v9h-8zM6 220h20v16H6z" /><path d="M12 223l8 4-8 5z" fill="#cdcec9" />
    <circle cx="33" cy="251" r="4" fill="#d8d9d4" /><path d="M31 251h4" />
  </svg>
);

const tools: [string, string][] = [
  ["move", "移动"], ["pScale", "缩放"], ["pStretch", "拉伸"], ["pPolar", "极轴拉伸"], ["pRotate", "旋转"],
  ["pFlip", "翻转"], ["pArray", "阵列"], ["pLookup", "查寻"], ["table", "块特性表"],
];

export default function App() {
  return (
    <Window>
      <Global />
      <TitleBar>
        <IconButton $w={28} aria-label="应用程序菜单"><Ic n="logo" w={18} h={20} /></IconButton>
        <IconButton $w={14} aria-label="菜单"><Caret w={8} /></IconButton>
        <IconButton $w={12} aria-hidden="true" />
        {["new", "open", "floppy", "saveas", "web", "mobile", "print", "undo"].map((n) => (
          <IconButton key={n} aria-label={n}><Ic n={n} /></IconButton>
        ))}
        <IconButton $w={14} aria-label="放弃列表"><Caret w={6} /></IconButton>
        <IconButton aria-label="重做"><Ic n="redo" /></IconButton>
        <IconButton $w={16} aria-label="重做列表"><Caret w={6} fill="#8b9098" /></IconButton>
        <IconButton $w={20} aria-label="自定义"><Ic n="custom" w={10} h={18} /></IconButton>
        <Share><Ic n="plane" />共享</Share>
        <Title><span>Autodesk AutoCAD 2022</span><span>Drawing3.dwg</span></Title>
        <IconButton $w={8} aria-label="展开"><Ic n="play" w={6} h={20} /></IconButton>
        <Search aria-label="搜索" placeholder="键入关键字或短语" />
        <IconButton $w={24} aria-label="搜索"><Ic n="mag" w={19} h={20} /></IconButton>
        <SignIn><Ic n="user" />登录</SignIn>
        <IconButton $w={20} aria-label="账户"><Caret w={6} /></IconButton>
        <IconButton aria-label="购物车"><Ic n="cart" w={17} h={18} /></IconButton>
        <IconButton aria-label="应用"><Ic n="apps" /></IconButton>
        <IconButton $w={14} aria-label="应用列表"><Caret w={6} /></IconButton>
        <Rule />
        <IconButton $w={26} aria-label="帮助"><Help>?</Help></IconButton>
        <IconButton $w={26} aria-label="帮助列表"><Caret w={6} /></IconButton>
        <IconButton $w={70} aria-hidden="true" />
        <IconButton aria-label="最小化"><Ic n="min" w={10} h={18} /></IconButton>
        <IconButton aria-label="最大化"><Ic n="max" w={15} h={20} /></IconButton>
        <IconButton aria-label="关闭"><Ic n="close" w={14} h={20} /></IconButton>
      </TitleBar>

      <TabRow>
        {["默认", "插入", "注释", "参数化", "视图", "管理", "输出", "附加模块"].map((t) => <Tab key={t}>{t}</Tab>)}
        <Tab $latin>Express Tools</Tab>
        <Tab>精选应用</Tab>
        <Tab $on>块编辑器</Tab>
        <Minimize aria-label="最小化功能区"><MinimizeBox><svg width="6" height="4" viewBox="0 0 6 4"><path d="M3 0L6 4H0Z" fill="#555" /></svg></MinimizeBox><Caret w={6} /></Minimize>
      </TabRow>

      <Ribbon>
        <Group w={165} pad={3} title="打开/保存" drop>
          <Button2 w={48} icon="edit" a="编辑" b="块" />
          <Button2 w={48} icon="save" a="保存" b="块" />
          <Divider $l={6} $r={7} />
          <Button2 w={48} icon="test" a="测试" b="块" />
        </Group>
        <Group w={294} title="几何" launch>
          <Button2 icon="auto" a="自动" b="约束" w={50} />
          <IconGrid cols={4} names={["perp", "coll", "conc", "fix", "para", "tang2", "horiz", "vert", "tang", "smooth", "sym", "equal"]} />
          <Divider $l={7} $r={12} />
          <TextRows items={[["showhide", "显示/隐藏"], ["showall", "全部显示"], ["hideall", "全部隐藏"]]} />
        </Group>
        <Group w={235} pad={5} title="标注" launch>
          <Button2 icon="linear" a="线性" drop />
          <Button2 icon="aligned" a="对齐" />
          <IconGrid cols={2} names={["rad", "dia", "ang", "conv"]} />
          <Divider $l={6} $r={5} />
          <Button2 icon="table" a="块表" />
        </Group>
        <Group w={224} pad={7} title="管理" launch>
          <TextRows items={[["del", "删除"], ["cons", "构造"], ["state", "约束状态"]]} />
          <Divider $l={7} $r={9} />
          <Button2 icon="fx" a="参数" b="管理器" />
          <Button2 icon="author" a="编写" b="选项板" on />
        </Group>
        <Group w={174} pad={1} title="操作参数" drop>
          <Button2 icon="point" a="点" drop />
          <Button2 icon="move" a="移动" drop />
          <Divider $l={9} $r={5} />
          <Button2 icon="tag" a="属性" b="定义" />
        </Group>
        <Group w={309} pad={2} title="可见性">
          <Button2 icon="vis" a="可见性" b="状态" off />
          <Visibility>
            <SmallRow>
              {["v1", "v2", "v3"].map((n) => <IconButton key={n} $w={32} aria-label={n} disabled><Ic n={n} /></IconButton>)}
            </SmallRow>
            <SelectBox>
              <Select aria-label="可见性状态" disabled><option>可见性状态0</option></Select>
              <SelectArrow><Caret w={10} fill="#b5b8be" /></SelectArrow>
            </SelectBox>
          </Visibility>
        </Group>
        <Group w={73} pad={5} title="关闭" last>
          <Button2 w={62} icon="check" a="关闭" b="块编辑器" />
        </Group>
      </Ribbon>

      <FileTabs>
        <Slope /><FileTab $w={60}>开始</FileTab><Slope flip />
        <FileTab $w={208}>Drawing3*
          <svg width="14" height="14" viewBox="0 0 14 14" aria-hidden="true"><path d="M2 2L12 12M12 2L2 12" stroke="#a4a8af" strokeWidth="2.500" /></svg>
        </FileTab><Slope flip />
        <AddTab aria-label="新建选项卡"><PlusMark /></AddTab>
      </FileTabs>
      <Strip />

      <Main>
        <Layers>
          <LayersHead><Grip $h={12} />图层特性管理器</LayersHead>
          <Current>当前图层: 0</Current>
          <LayerTools><Ic n="folderF" /><Ic n="folder" /></LayerTools>
          <LayerBody>
            <Tree>
              <IconButton $w={24} $h={28} aria-label="展开"><Ic n="dbl" w={16} h={20} /></IconButton>
              <IconButton $w={24} $h={20} aria-label="展开过滤器"><Ic n="dbl" w={16} h={20} /></IconButton>
            </Tree>
            <LayerList>
              <LayerTable>
                <thead><tr><th>状态</th></tr></thead>
                <tbody>
                  <LayerRow $on><td><svg width="20" height="14" viewBox="0 0 20 14"><path d="M2 6l4 4 8-8" stroke={c.green} strokeWidth="3" fill="none" /></svg></td></LayerRow>
                  {[0, 1].map((k) => <LayerRow key={k}><td><svg width="20" height="8" viewBox="0 0 20 8"><path d="M0 8L8 0H20L12 8Z" fill={c.blue} /></svg></td></LayerRow>)}
                </tbody>
              </LayerTable>
              <Columns />
              <Scroll>
                <IconButton $w={21} $h={21} aria-label="向左"><svg width="7" height="10" viewBox="0 0 7 10"><path d="M6 0L1 5L6 10" stroke="#555" strokeWidth="2" fill="none" /></svg></IconButton>
                <Thumb /><Grow />
                <IconButton $w={21} $h={21} aria-label="向右"><svg width="7" height="10" viewBox="0 0 7 10"><path d="M1 0L6 5L1 10" stroke="#555" strokeWidth="2" fill="none" /></svg></IconButton>
              </Scroll>
            </LayerList>
          </LayerBody>
          <LayerFoot><Ic n="folderB" /><IconButton $w={14} $h={20} aria-label="过滤器"><Caret w={9} /></IconButton><FootText>全部: 显示了 3 个图层，共 3 个图层</FootText></LayerFoot>
        </Layers>

        <Canvas>
          <Model />
          <ViewControls>
            <svg width="15" height="16" viewBox="0 0 15 16"><rect x="1" y="8" width="13" height="6" fill="#fff" stroke="#626468" strokeWidth="2" /></svg>
            <svg width="15" height="16" viewBox="0 0 15 16"><path d="M4 1H14V12" fill="none" stroke="#626468" strokeWidth="2" /><rect x="1" y="4" width="10" height="11" fill="#fff" stroke="#626468" strokeWidth="2" /><rect x="4.500" y="8" width="3" height="3" fill="none" stroke="#626468" /></svg>
            <svg width="15" height="16" viewBox="0 0 15 16"><path d="M0 1H15V15H0Z" fill="#8b8d8f" opacity=".5" /><path d="M2 2L13 14M13 2L2 14" stroke="#4c4f55" strokeWidth="6" /><path d="M3 3L12 13M12 3L3 13" stroke="#fff" strokeWidth="2.500" /></svg>
          </ViewControls>
          <Cube>
            <CubeRing />
            <Compass $area="1/2">北</Compass><Compass $area="2/1">西</Compass>
            <CubeFace><FaceMark>上</FaceMark></CubeFace>
            <Compass $area="2/3">东</Compass><Compass $area="3/2">南</Compass>
          </Cube>
          <Wcs>WCS<svg width="12" height="7" viewBox="0 0 12 7"><path d="M1 .5H11L6 6Z" fill="none" stroke="#9a9ca4" /></svg></Wcs>
          <NavBar><NavArt /></NavBar>
          <Prompt>
            <PromptText>指定拉伸框架的第一个角点或
              <PromptKey><svg width="8" height="10" viewBox="0 0 8 10"><path d="M4 0V7M1 4L4 7L7 4M0 9.500H8" stroke="#666" fill="none" /></svg></PromptKey>
            </PromptText>
            <Coord $on aria-label="X" defaultValue="42.8320" />
            <Coord aria-label="Y" defaultValue="49.3145" />
          </Prompt>
          <History>
            <HistoryLine>指定拉伸框架的第一个角点或<Mono> [</Mono>圈交<Mono>(CP)]:</Mono></HistoryLine>
            <HistoryLine><Mono>&gt;&gt;</Mono>输入<Mono> ORTHOMODE </Mono>的新值<Mono> &lt;0&gt;:</Mono></HistoryLine>
            <HistoryLine>正在恢复执行<Mono> BACTIONTOOL </Mono>命令。</HistoryLine>
          </History>
          <Command>
            <IconButton $w={14} aria-label="移动"><Grip $h={22} /></IconButton>
            <IconButton $w={20} aria-label="关闭命令行"><svg width="12" height="12" viewBox="0 0 12 12"><path d="M1 1L11 11M11 1L1 11" stroke="#dcdcdc" strokeWidth="2.200" /></svg></IconButton>
            <IconButton $w={35} aria-label="自定义"><Ic n="wrench" /></IconButton>
            <CommandText>
              <svg width="22" height="20" viewBox="0 0 22 20"><path d="M7 1L0 7H4L2 12L10 5H6Z" fill={c.gold} /><path d="M12 9H22L17 14Z" fill="#666" /></svg>
              <CommandName>BACTIONTOOL</CommandName>指定拉伸框架的第一个角点或<Mono> [</Mono><Option>圈交<Mono>(<i>CP</i>)</Mono></Option><Mono>]:</Mono>
              <Grow />
              <svg width="8" height="5" viewBox="0 0 8 5"><path d="M4 0L8 5H0Z" fill="#666" /></svg>
            </CommandText>
          </Command>
          <Watermark aria-label="Baidu">
            <MarkTop>
              <span>Bai</span>
              <MarkPaw>
                <svg width="100" height="111" viewBox="0 0 100 111" fill="#fff" stroke="#c3c4be" strokeWidth="1">
                  <ellipse cx="15" cy="42" rx="12.500" ry="16" transform="rotate(-8 15 42)" /><ellipse cx="39" cy="18" rx="12" ry="17" />
                  <ellipse cx="69" cy="20" rx="12.500" ry="16" transform="rotate(12 69 20)" /><ellipse cx="88" cy="49" rx="12.500" ry="16" transform="rotate(8 88 49)" />
                  <path d="M51 44C62 44 68 58 78 67C91 78 95 85 92 95C88 109 74 109 52 106C34 108 17 110 11 97C7 84 13 76 23 68C33 58 39 44 51 44Z" />
                </svg>
                <MarkDu>du</MarkDu>
              </MarkPaw>
              <MarkCjk>经验</MarkCjk>
            </MarkTop>
            <MarkUrl>jingyan.baidu.com</MarkUrl>
          </Watermark>
        </Canvas>
      </Main>

      <Bottom>
        <LayoutTabs>
          <Slope down h={22} /><LayoutTab $on>模型</LayoutTab><Slope down flip h={22} />
          <LayoutTab>布局1</LayoutTab><Slope down flip h={22} fill="#2f3743" />
          <AddTab $up aria-label="新建布局"><PlusMark /></AddTab>
        </LayoutTabs>
        <Status>
          <Cell $w={188}>42.8320, 49.3145, 0.0000</Cell>
          <Cell $w={38} $gap={3}><Semi>模型</Semi></Cell>
          <Cells gap={3} items={[["sGrid"], ["sDots"], ["v"]]} />
          <Cells gap={3} items={[["sInfer"]]} />
          <Cells items={[["sDyn", true]]} />
          <Cells items={[["sOrtho"], ["sPolar"], ["v"], ["sIso"], ["v"]]} />
          <Cells items={[["sTrack", true]]} />
          <Cells gap={0} items={[["sSnap", true], ["v"]]} />
          <Cells items={[["sLwt"]]} />
          <Cells items={[["sTrans"]]} />
          <Cells items={[["sCycle"]]} />
          <Cells items={[["s3d"], ["v"]]} />
          <Cells gap={3} items={[["sUcs"], ["sFilter"], ["v"], ["sGizmo", true], ["v"]]} />
          <Cells gap={3} items={[["sAnno1"], ["sAnno2"], ["sAnno3"]]}>
            <Scale>1:1 / 100%<Caret w={10} /></Scale>
          </Cells>
          <Cells gap={3} items={[["gear"], ["v"]]} />
          <Cells items={[["plus"]]} />
          <Cell $w={121} $gap={3}><Units><Ic n="ruler" />小数<Grow /><Caret w={10} /></Units></Cell>
          <Cells items={[["sProps"]]} />
          <Cells gap={3} items={[["sLock"], ["v"]]} />
          <Cells items={[["sIsolate"]]} />
          <Cells gap={3} items={[["sPerf", true]]} />
          <Cell $w={4} $gap={3} />
          <Cells gap={3} items={[["sFull"], ["sMenu"]]} />
        </Status>
      </Bottom>

      <Palette>
        <PaletteFrame>
          <PaletteSide>
            <IconButton $w={26} $h={20} aria-label="关闭选项板"><svg width="12" height="12" viewBox="0 0 12 12"><path d="M1 1L11 11M11 1L1 11" stroke="#c6c9ce" strokeWidth="3" /></svg></IconButton>
            <IconButton $w={26} $h={26} aria-label="自动隐藏"><Ic n="pin" w={11} h={20} /></IconButton>
            <IconButton $w={26} $h={24} aria-label="特性"><svg width="14" height="14" viewBox="0 0 20 20">{art.gear}</svg></IconButton>
            <SideTitle>块编写选项板 - 所有选项板</SideTitle>
            <Ic n="pGrid" w={16} h={20} />
          </PaletteSide>
          <Tools>
            {tools.map(([n, t]) => <li key={t}><Tool><Ic n={n} w={40} />{t}</Tool></li>)}
          </Tools>
        </PaletteFrame>
        <SideTabs>
          {["参数", "动作", "参数集", "约束"].map((t) => <SideTab key={t} $on={t === "动作"}><span>{t}</span></SideTab>)}
        </SideTabs>
      </Palette>
    </Window>
  );
}
